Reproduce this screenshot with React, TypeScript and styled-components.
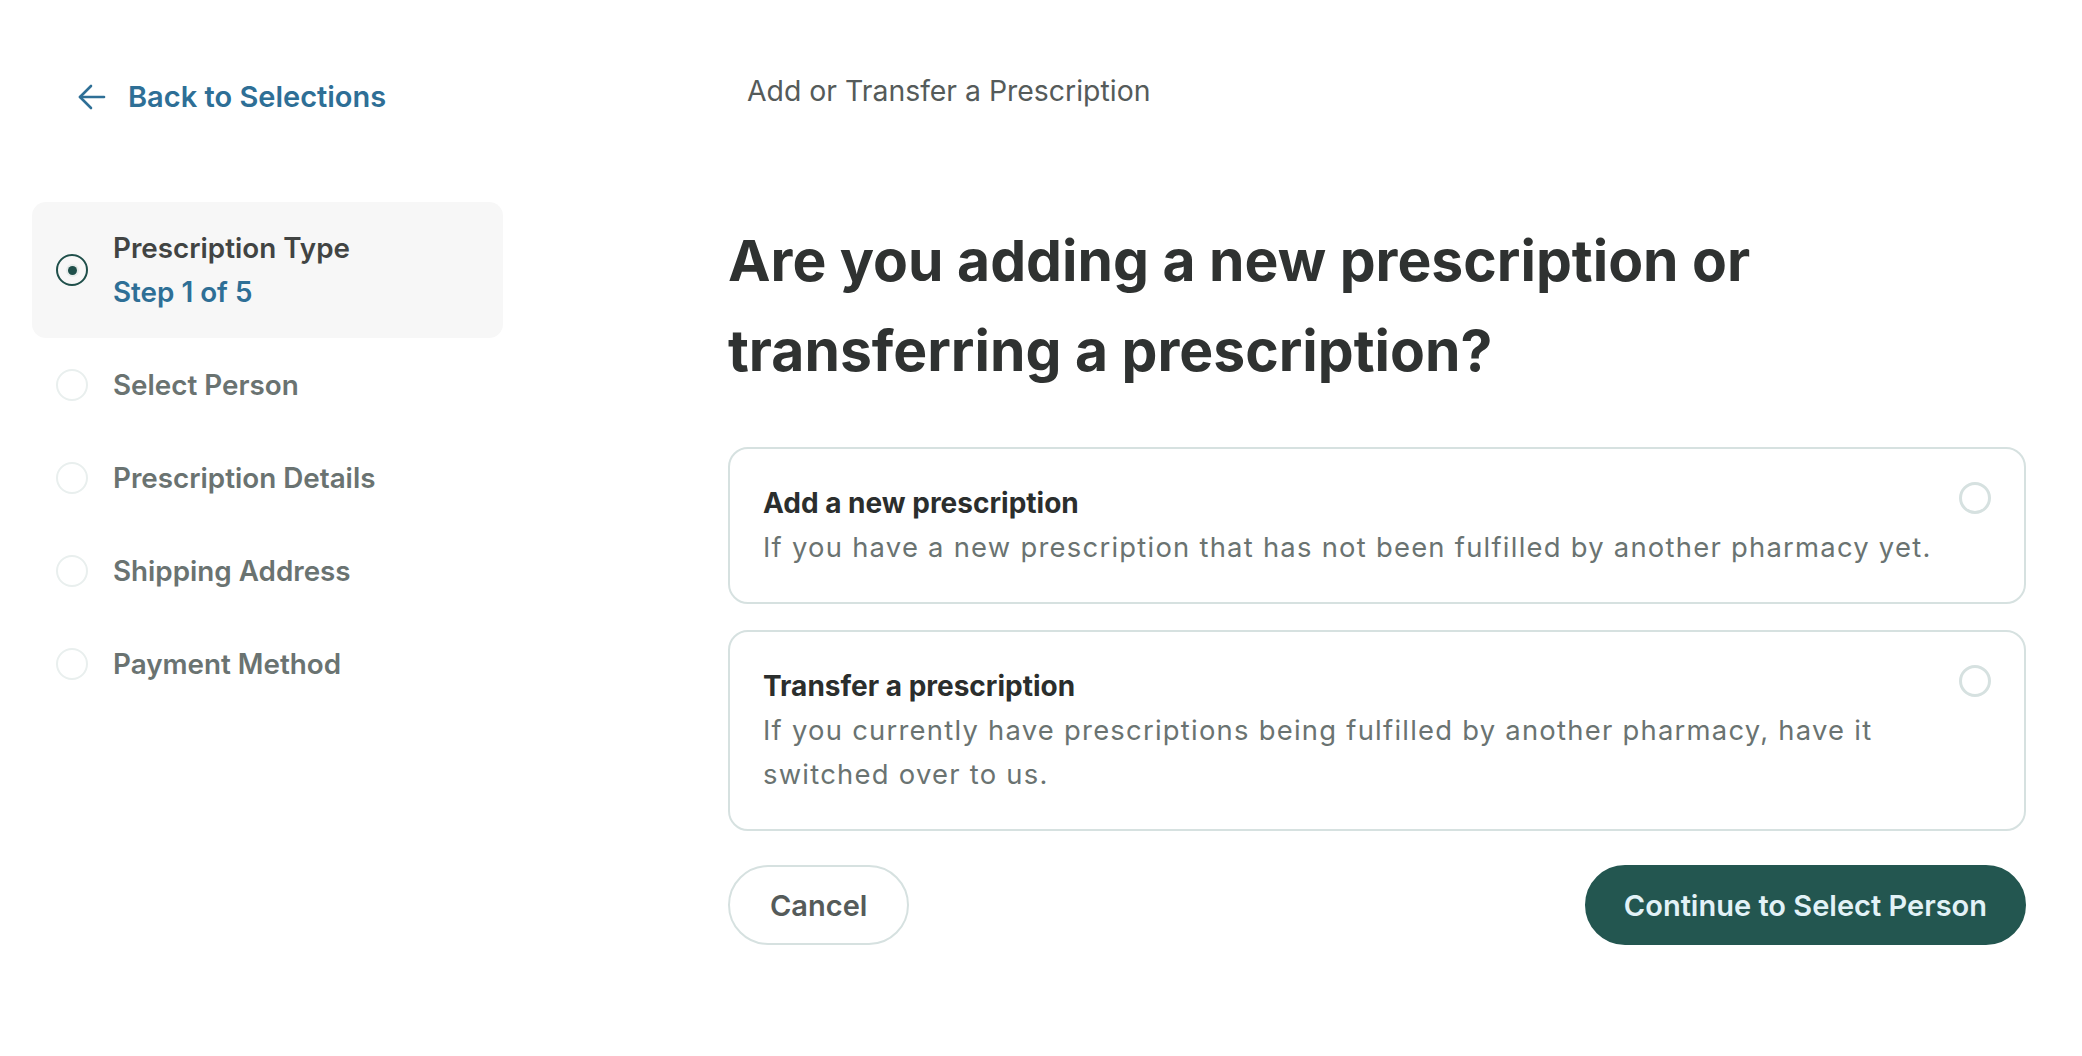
import React from "react";
import styled, { createGlobalStyle } from "styled-components";

const Global = createGlobalStyle`
  html, body { margin: 0; padding: 0; background: #ffffff; }
  body { font-family: "Inter", "Liberation Sans", sans-serif; -webkit-font-smoothing: antialiased; }
  * { box-sizing: border-box; }
`;

const Page = styled.div`
  display: flex;
  align-items: flex-start;
  padding: 0 56px 0 32px;
  min-height: 1056px;
`;

const Sidebar = styled.aside`
  width: 471px;
  flex: none;
  display: flex;
  flex-direction: column;
  padding-top: 77px;
`;

const BackLink = styled.a`
  display: flex;
  align-items: center;
  gap: 22px;
  margin-left: 45px;
  height: 40px;
  color: #2e6f96;
  font-size: 29px;
  font-weight: 600;
  line-height: 40px;
  text-decoration: none;
  cursor: pointer;
`;

const Steps = styled.ol`
  list-style: none;
  margin: 85px 0 0;
  padding: 0;
  display: flex;
  flex-direction: column;
  gap: 1px;
`;

const StepItem = styled.li<{ $active?: boolean }>`
  display: flex;
  align-items: center;
  gap: 25px;
  padding: 24px 24px;
  border-radius: 14px;
  background: ${(p) => (p.$active ? "#f7f7f7" : "transparent")};
`;

const StepDot = styled.span<{ $active?: boolean }>`
  flex: none;
  width: 32px;
  height: 32px;
  border-radius: 50%;
  border: 2px solid ${(p) => (p.$active ? "#1f4f4a" : "#e9efee")};
  display: flex;
  align-items: center;
  justify-content: center;
  &::after {
    content: "";
    display: ${(p) => (p.$active ? "block" : "none")};
    width: 9px;
    height: 9px;
    border-radius: 50%;
    background: #1f4f4a;
    box-shadow: 0 0 0 2px #e6ebea;
  }
`;

const StepText = styled.div`
  display: flex;
  flex-direction: column;
`;

const StepTitle = styled.span<{ $active?: boolean }>`
  font-size: 27.8px;
  line-height: 44px;
  font-weight: 600;
  color: ${(p) => (p.$active ? "#414443" : "#6a7371")};
`;

const StepCount = styled.span`
  font-size: 27.8px;
  line-height: 44px;
  font-weight: 600;
  color: #2e6f96;
`;

const Main = styled.main`
  flex: 1;
  margin-left: 225px;
  display: flex;
  flex-direction: column;
  padding-top: 71px;
`;

const Eyebrow = styled.div`
  margin-left: 19px;
  font-size: 28.4px;
  line-height: 40px;
  font-weight: 400;
  color: #555b5a;
`;

const Title = styled.h1`
  margin: 105px 0 0;
  max-width: 1080px;
  font-size: 57px;
  line-height: 90px;
  font-weight: 700;
  color: #2f3231;
`;

const Options = styled.div`
  margin-top: 51px;
  display: flex;
  flex-direction: column;
  gap: 26px;
`;

const OptionCard = styled.label`
  display: flex;
  align-items: flex-start;
  gap: 12px;
  padding: 33px;
  border: 2px solid #d6e1e0;
  border-radius: 20px;
  background: #ffffff;
  cursor: pointer;
`;

const OptionText = styled.div`
  flex: 1;
  display: flex;
  flex-direction: column;
`;

const OptionTitle = styled.span`
  font-size: 28px;
  line-height: 43px;
  font-weight: 700;
  color: #2b2e2d;
`;

const OptionDesc = styled.span`
  font-size: 27.4px;
  line-height: 44px;
  letter-spacing: 1.25px;
  font-weight: 400;
  color: #6a7371;
`;

const Radio = styled.span`
  flex: none;
  width: 32px;
  height: 32px;
  border-radius: 50%;
  border: 3px solid #d6e1e0;
  background: #ffffff;
`;

const Actions = styled.div`
  margin-top: 34px;
  display: flex;
  justify-content: space-between;
  align-items: center;
`;

const Button = styled.button<{ $primary?: boolean }>`
  height: 80px;
  padding: 0 ${(p) => (p.$primary ? "37px" : "40px")};
  border-radius: 40px;
  font-family: inherit;
  font-size: 29px;
  font-weight: 600;
  cursor: pointer;
  border: 2px solid ${(p) => (p.$primary ? "#235650" : "#d6e1e0")};
  background: ${(p) => (p.$primary ? "#235650" : "#ffffff")};
  color: ${(p) => (p.$primary ? "#e2f2f7" : "#555b5a")};
`;

const ArrowLeft = () => (
  <svg width="29" height="28" viewBox="0 0 29 28" fill="none" stroke="#2e6f96" strokeWidth="2.6" strokeLinecap="round" strokeLinejoin="round">
    <path d="M27 14H3" />
    <path d="M14 3L3 14L14 25" />
  </svg>
);

const steps = ["Select Person", "Prescription Details", "Shipping Address", "Payment Method"];

export default function App() {
  return (
    <>
      <Global />
      <Page>
        <Sidebar>
          <BackLink>
            <ArrowLeft />
            Back to Selections
          </BackLink>
          <Steps>
            <StepItem $active>
              <StepDot $active />
              <StepText>
                <StepTitle $active>Prescription Type</StepTitle>
                <StepCount>Step 1 of 5</StepCount>
              </StepText>
            </StepItem>
            {steps.map((s) => (
              <StepItem key={s}>
                <StepDot />
                <StepText>
                  <StepTitle>{s}</StepTitle>
                </StepText>
              </StepItem>
            ))}
          </Steps>
        </Sidebar>
        <Main>
          <Eyebrow>Add or Transfer a Prescription</Eyebrow>
          <Title>Are you adding a new prescription or transferring a prescription?</Title>
          <Options>
            <OptionCard>
              <OptionText>
                <OptionTitle>Add a new prescription</OptionTitle>
                <OptionDesc>If you have a new prescription that has not been fulfilled by another pharmacy yet.</OptionDesc>
              </OptionText>
              <Radio />
            </OptionCard>
            <OptionCard>
              <OptionText>
                <OptionTitle>Transfer a prescription</OptionTitle>
                <OptionDesc>
                  If you currently have prescriptions being fulfilled by another pharmacy, have it switched over to us.
                </OptionDesc>
              </OptionText>
              <Radio />
            </OptionCard>
          </Options>
          <Actions>
            <Button>Cancel</Button>
            <Button $primary>Continue to Select Person</Button>
          </Actions>
        </Main>
      </Page>
    </>
  );
}
